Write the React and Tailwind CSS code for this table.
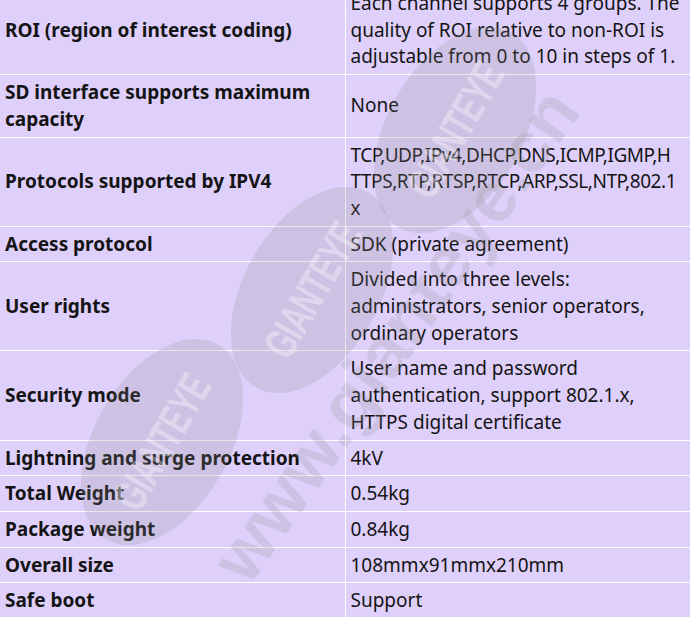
import React from "react";

const rows = [
  ["ROI (region of interest coding)", ["Each channel supports 4 groups. The", "quality of ROI relative to non-ROI is", "adjustable from 0 to 10 in steps of 1."]],
  ["SD interface supports maximum capacity", ["None"]],
  ["Protocols supported by IPV4", ["TCP,UDP,IPv4,DHCP,DNS,ICMP,IGMP,H", "TTPS,RTP,RTSP,RTCP,ARP,SSL,NTP,802.1", "x"], true],
  ["Access protocol", ["SDK (private agreement)"]],
  ["User rights", ["Divided into three levels:", "administrators, senior operators,", "ordinary operators"]],
  ["Security mode", ["User name and password", "authentication, support 802.1.x,", "HTTPS digital certificate"]],
  ["Lightning and surge protection", ["4kV"]],
  ["Total Weight", ["0.54kg"]],
  ["Package weight", ["0.84kg"]],
  ["Overall size", ["108mmx91mmx210mm"]],
  ["Safe boot", ["Support"]],
];

const Badge = ({ className }) => (
  <div className={"pointer-events-none absolute flex h-[135px] w-[225px] -translate-x-1/2 -translate-y-1/2 -rotate-[60deg] items-center justify-center rounded-[50%] bg-[#8c8c8c]/20 " + className}>
    <span className="text-[30px] font-bold tracking-tight text-white/35 [font-family:'Liberation_Sans',sans-serif] [transform:scaleY(1.5)]">
      GIANTEYE
    </span>
  </div>
);

export default function App() {
  return (
    <div className="relative h-[617px] w-[690px] overflow-hidden bg-[#dfd0fb] text-[#141414] [font-family:'Noto_Sans',sans-serif]">
      <table className="mt-[-14px] w-full table-fixed border-collapse text-[19px] leading-[26.7px]">
        <colgroup>
          <col className="w-[345px]" />
          <col />
        </colgroup>
        <tbody>
          {rows.map(([label, value, tight], i) => (
            <tr key={i} className="border-b border-white">
              <td className="border-r border-white py-[4px] pl-[5px] pr-2 align-middle font-bold">
                {label}
              </td>
              <td className={"py-[4px] pl-[5px] pr-0 align-middle " + (tight ? "tracking-[-0.45px]" : "")}>
                {value.map((line, j) => (
                  <div key={j} className="whitespace-nowrap">{line}</div>
                ))}
              </td>
            </tr>
          ))}
        </tbody>
      </table>

      {/* watermark */}
      <Badge className="left-[455px] top-[130px]" />
      <Badge className="left-[312px] top-[290px]" />
      <Badge className="left-[162px] top-[442px]" />
      <div className="pointer-events-none absolute left-[395px] top-[335px] -translate-x-1/2 -translate-y-1/2 -rotate-[55deg] whitespace-nowrap text-[72px] font-bold text-[#8c8c8c]/20 [font-family:'Liberation_Sans',sans-serif]">
        www.gianteye.cn
      </div>
    </div>
  );
}
